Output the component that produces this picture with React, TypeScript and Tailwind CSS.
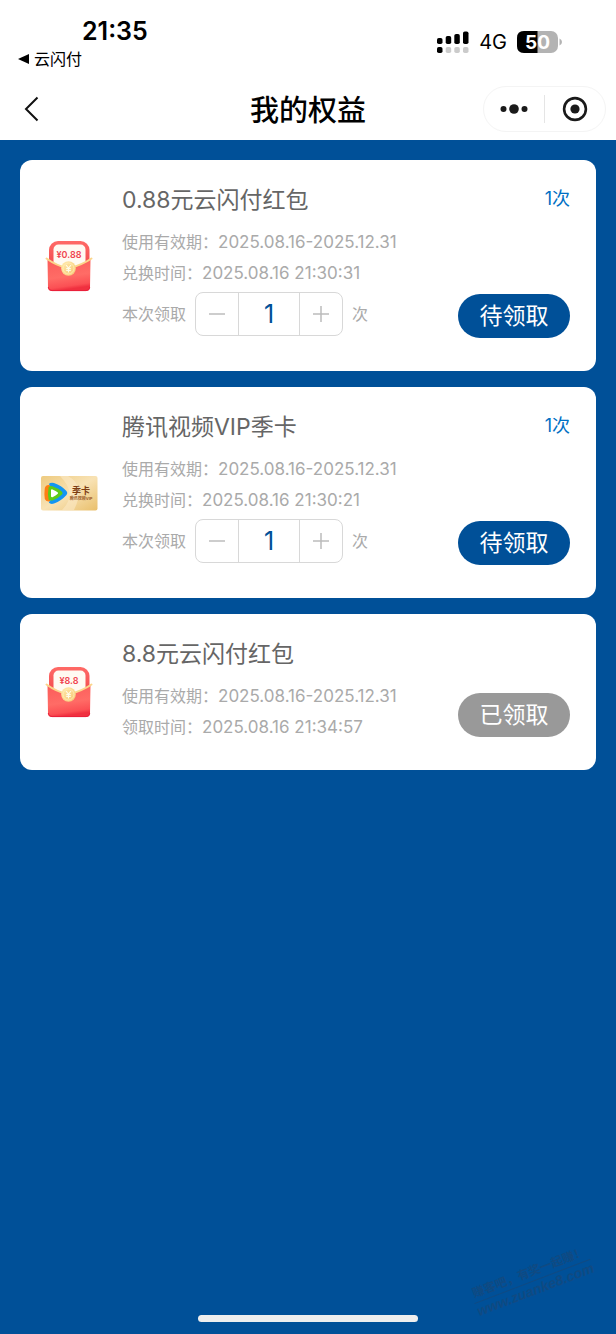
import { useState } from "react";

type Benefit = {
  id: number;
  title: string;
  icon: "packet" | "video";
  amount?: string;
  validity: string;
  timeLabel: string;
  time: string;
  count?: number;
  claimed: boolean;
};

const benefits: Benefit[] = [
  {
    id: 1,
    title: "0.88元云闪付红包",
    icon: "packet",
    amount: "¥0.88",
    validity: "2025.08.16-2025.12.31",
    timeLabel: "兑换时间：",
    time: "2025.08.16 21:30:31",
    count: 1,
    claimed: false,
  },
  {
    id: 2,
    title: "腾讯视频VIP季卡",
    icon: "video",
    validity: "2025.08.16-2025.12.31",
    timeLabel: "兑换时间：",
    time: "2025.08.16 21:30:21",
    count: 1,
    claimed: false,
  },
  {
    id: 3,
    title: "8.8元云闪付红包",
    icon: "packet",
    amount: "¥8.8",
    validity: "2025.08.16-2025.12.31",
    timeLabel: "领取时间：",
    time: "2025.08.16 21:34:57",
    claimed: true,
  },
];

const PacketIcon = ({ amount }: { amount?: string }) => (
  <svg viewBox="0 0 58 58" className="size-[58px] shrink-0">
    <defs>
      <linearGradient id="back" x1="0" y1="0" x2="0" y2="1">
        <stop offset="0" stopColor="#ff6a66" />
        <stop offset="1" stopColor="#e8373f" />
      </linearGradient>
      <linearGradient id="front" x1="0" y1="0" x2="0.2" y2="1">
        <stop offset="0" stopColor="#fb5c5a" />
        <stop offset="0.6" stopColor="#ff6c66" />
        <stop offset="0.9" stopColor="#fb5054" />
        <stop offset="1" stopColor="#f0303f" />
      </linearGradient>
      <linearGradient id="coin" x1="0" y1="0" x2="1" y2="1">
        <stop offset="0" stopColor="#ffe9ab" />
        <stop offset="1" stopColor="#f7c873" />
      </linearGradient>
    </defs>
    <rect x="9" y="4" width="40.5" height="42" rx="9" fill="url(#back)" />
    <rect x="13.5" y="7.5" width="32" height="34" rx="5" fill="#fffaf2" />
    <path d="M7.5 22.5 L28.5 33 L50.5 22.5 L50 50 Q50 54 46 54 L12 54 Q8 54 8 50 Z" fill="url(#front)" />
    <path d="M8.2 50 Q8.5 53.6 12 53.6 L46 53.6 Q49.6 53.6 49.8 50" fill="none" stroke="#e91f3a" strokeWidth="1" />
    <path d="M6.5 21.5 Q16 28.5 28.5 31.5 Q42 28 51.5 21.5" fill="none" stroke="#fbd58a" strokeWidth="2" strokeLinecap="round" />
    <circle cx="28.5" cy="31.5" r="7.3" fill="url(#coin)" />
    <circle cx="28.5" cy="31.5" r="5.5" fill="none" stroke="#fff0bf" strokeWidth="0.7" />
    <path d="M26 28 L28.5 31.2 L31 28 M28.5 31.2 V35.5 M26.2 31.6 H30.8 M26.2 33.5 H30.8" fill="none" stroke="#fffbe8" strokeWidth="1.1" />
    <text x="29" y="20.5" textAnchor="middle" fontSize="9" fontWeight="600" fill="#f04550">
      {amount}
    </text>
  </svg>
);

const VideoIcon = () => (
  <svg viewBox="0 0 58 58" className="size-[58px] shrink-0">
    <defs>
      <linearGradient id="gold" x1="0" y1="0" x2="1" y2="1">
        <stop offset="0" stopColor="#eecb80" />
        <stop offset="0.5" stopColor="#f8e2b4" />
        <stop offset="1" stopColor="#e9bf6b" />
      </linearGradient>
    </defs>
    <rect x="1" y="12" width="56.5" height="34.5" rx="2" fill="url(#gold)" />
    <path d="M28 12 Q46 22 34 46 L22 46 Q38 30 20 12 Z" fill="#fbeac6" opacity="0.6" />
    <path d="M4.8 24 Q6 20.2 10 21.2 V37.2 Q6 38.2 4.8 35 Q4 29.5 4.8 24 Z" fill="#ff7e12" />
    <path d="M8.8 20 Q10.5 18.2 14 19 Q21.5 21.6 26.5 27 Q28.2 29 26.5 31 Q21.5 36.6 14 39.6 Q10.5 40.6 8.8 38.6 L10.5 36 V22.5 Z" fill="#1395f2" />
    <path d="M8.6 23.2 Q10 21.6 12.5 22.3 Q18.5 24.4 22 27.8 Q23.3 29.2 22 30.6 Q18.5 34.4 12.5 36.4 Q10 37 8.6 35.8 Q7.4 29.5 8.6 23.2 Z" fill="#5fcb18" />
    <path d="M11 26 Q11.2 25.1 12.5 25.4 Q16 26.8 17.8 28.6 Q18.4 29.2 17.8 29.8 Q16 31.8 12.5 33.2 Q11.2 33.4 11 32.6 Z" fill="#fff" />
    <text x="41" y="30" textAnchor="middle" fontSize="9" fontWeight="700" fill="#7d3d12">
      季卡
    </text>
    <text x="41" y="36" textAnchor="middle" fontSize="4" fontWeight="700" fill="#9a5c2b">
      腾讯视频VIP
    </text>
  </svg>
);

const StatusBar = () => (
  <div className="flex h-[78px] items-start justify-between pt-4 pr-[54px] pl-[18px]">
    <div>
      <div className="pl-16 text-[25px] leading-[30px] font-semibold">21:35</div>
      <a href="#" className="flex h-[26px] items-center gap-[5px] text-base">
        <svg viewBox="0 0 11 10" className="h-[10px] w-[11px]">
          <path d="M0 5 L11 0 V10 Z" />
        </svg>
        云闪付
      </a>
    </div>
    <div className="flex items-center gap-[10px] pt-[14px]">
      <svg viewBox="0 0 32 22" className="h-[22px] w-8">
        <rect x="0" y="7" width="5.5" height="6" rx="1.8" />
        <rect x="8.7" y="5" width="5.5" height="8" rx="1.8" />
        <rect x="17.3" y="3" width="5.5" height="10" rx="1.8" />
        <rect x="26" y="0.5" width="5.5" height="12.5" rx="1.8" />
        <rect x="0" y="16" width="5.5" height="6" rx="1.8" />
        <g fill="#cbcbcb">
          <rect x="8.7" y="16" width="5.5" height="6" rx="1.8" />
          <rect x="17.3" y="16" width="5.5" height="6" rx="1.8" />
          <rect x="26" y="16" width="5.5" height="6" rx="1.8" />
        </g>
      </svg>
      <span className="text-xl leading-6">4G</span>
      <svg viewBox="0 0 45 22" className="h-[22px] w-[45px]">
        <rect width="41" height="22" rx="7" fill="#b3b3b3" />
        <path d="M7 0 H20.5 V22 H7 Q0 22 0 15 V7 Q0 0 7 0 Z" />
        <path d="M42.5 7.5 Q45 8.5 45 11 Q45 13.5 42.5 14.5 Z" fill="#b3b3b3" />
        <text x="20.5" y="18" textAnchor="middle" fontSize="19" fontWeight="700" fill="#fff">
          50
        </text>
      </svg>
    </div>
  </div>
);

const NavBar = () => (
  <div className="grid h-[62px] grid-cols-[1fr_auto_1fr] items-center px-[10px]">
    <button aria-label="返回" className="ml-[14px] w-4">
      <svg viewBox="0 0 16 26" className="h-[26px] w-4" fill="none" stroke="#111" strokeWidth="2">
        <path d="M13.5 1.5 L2 13 L13.5 24.5" />
      </svg>
    </button>
    <h1 className="pt-1 text-[29px] leading-10 font-medium">我的权益</h1>
    <div className="flex h-[46px] w-[123px] items-center justify-self-end rounded-full border border-[#f4f4f4]">
      <button aria-label="更多" className="flex flex-1 justify-center">
        <svg viewBox="0 0 28 12" className="h-3 w-7" fill="#1a1a1a">
          <circle cx="3.5" cy="6" r="3" />
          <circle cx="14" cy="6" r="4.8" />
          <circle cx="24.5" cy="6" r="3" />
        </svg>
      </button>
      <span className="h-7 w-px bg-[#e5e5e5]" />
      <button aria-label="关闭" className="flex flex-1 justify-center">
        <svg viewBox="0 0 26 26" className="size-[26px]">
          <circle cx="13" cy="13" r="10.9" fill="none" stroke="#1a1a1a" strokeWidth="2.6" />
          <circle cx="13" cy="13" r="4.6" fill="#1a1a1a" />
        </svg>
      </button>
    </div>
  </div>
);

const Stepper = ({ id, max }: { id: number; max: number }) => {
  const [value, setValue] = useState<number>(1);

  return (
    <div className="mt-[3px] mb-2 flex items-center gap-[9px]">
      <label htmlFor={`count-${id}`}>本次领取</label>
      <div className="flex h-11 w-[148px] rounded-lg border border-[#d8d8d8]">
        <button
          aria-label="减少"
          className="flex flex-1 items-center justify-center"
          onClick={() => setValue(Math.max(1, value - 1))}
        >
          <svg viewBox="0 0 16 16" className="size-4" stroke="#bcbcbc" strokeWidth="1.5">
            <path d="M0 8 H16" />
          </svg>
        </button>
        <input
          id={`count-${id}`}
          type="text"
          className="w-[62px] border-x border-[#d8d8d8] text-center text-[25px] leading-10 text-[#005098] outline-none"
          value={value}
          onChange={(e) => setValue(Number(e.target.value) || 1)}
        />
        <button
          aria-label="增加"
          className="flex flex-1 items-center justify-center"
          onClick={() => setValue(Math.min(max, value + 1))}
        >
          <svg viewBox="0 0 16 16" className="size-4" stroke="#bcbcbc" strokeWidth="1.5">
            <path d="M0 8 H16 M8 0 V16" />
          </svg>
        </button>
      </div>
      <span>次</span>
    </div>
  );
};

const BenefitCard = ({ item }: { item: Benefit }) => (
  <li className="flex rounded-xl bg-white pr-[26px] pl-5">
    <div className="flex items-center">
      {item.icon === "packet" ? <PacketIcon amount={item.amount} /> : <VideoIcon />}
    </div>
    <div className="flex-1 pt-[25px] pb-[27px] pl-6 text-base leading-[31px] text-[#aaaaaa]">
      <h2 className="mb-3 text-[23px] leading-[30px] text-[#666666]">{item.title}</h2>
      <p className="flex">
        使用有效期：<span className="text-[17px]">{item.validity}</span>
      </p>
      <p className="flex">
        {item.timeLabel}
        <span className="text-[17px]">{item.time}</span>
      </p>
      {item.count && <Stepper id={item.id} max={item.count} />}
    </div>
    <div className="flex flex-col items-end pt-[25px] pb-[33px]">
      {item.count && <span className="text-lg leading-7 text-[#0070c4]">{item.count}次</span>}
      {item.claimed ? (
        <button disabled className="mt-auto h-11 w-28 rounded-full bg-[#999999] text-[23px] text-white">
          已领取
        </button>
      ) : (
        <button className="mt-auto h-11 w-28 rounded-full bg-[#005098] text-[23px] text-white">待领取</button>
      )}
    </div>
  </li>
);

const App = () => {
  return (
    <div className="relative flex min-h-screen flex-col overflow-hidden bg-[#005098] font-['Inter','Noto_Sans_CJK_SC',sans-serif] text-black">
      <header className="bg-white">
        <StatusBar />
        <NavBar />
      </header>

      <main className="flex-1 px-5 py-5">
        <ul className="flex flex-col gap-4">
          {benefits.map((item) => (
            <BenefitCard key={item.id} item={item} />
          ))}
        </ul>
      </main>

      {/* site mark in the corner */}
      <div className="absolute right-[22px] bottom-9 -rotate-21 text-center font-bold text-[#104a82]">
        <p className="border-b border-[#104a82] text-xs leading-[18px]">赚客吧，有奖一起赚！</p>
        <p className="font-['Liberation_Sans',sans-serif] text-sm leading-4 italic">www.zuanke8.com</p>
      </div>

      {/* home indicator */}
      <div className="mx-auto mb-3 h-[7px] w-[220px] rounded-full bg-[#eeeeee]" />
    </div>
  );
};

export default App;
